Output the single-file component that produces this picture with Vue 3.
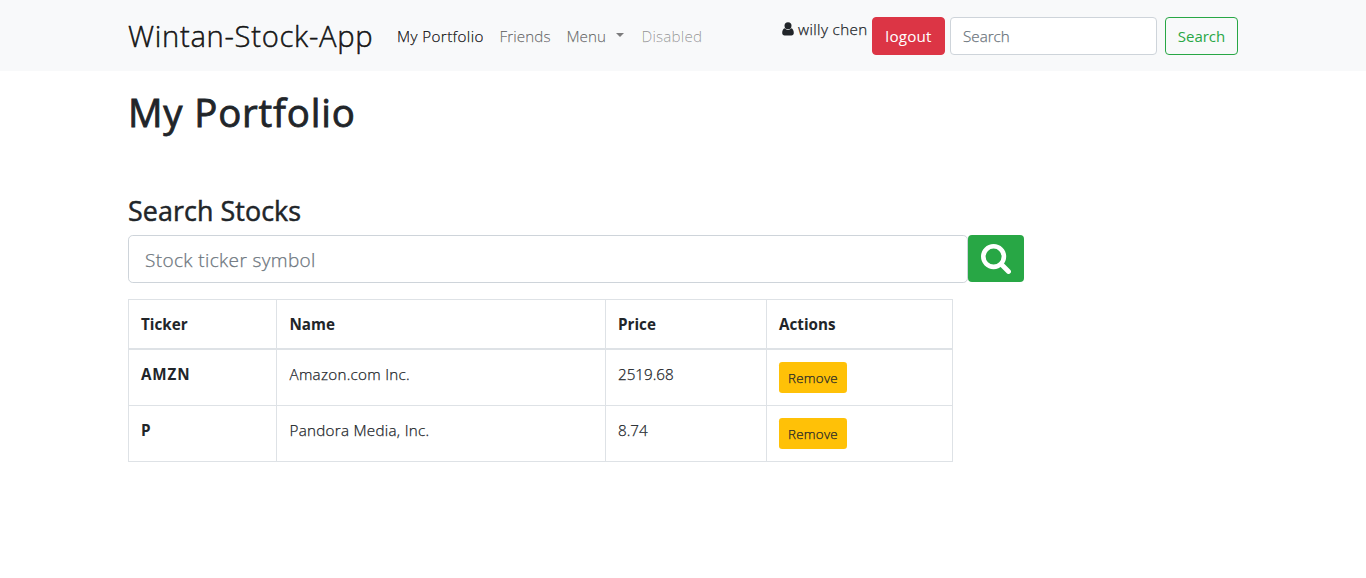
<script setup>
const stocks = [
  { ticker: 'AMZN', name: 'Amazon.com Inc.', price: '2519.68' },
  { ticker: 'P', name: 'Pandora Media, Inc.', price: '8.74' },
]
</script>

<template>
  <div class="page">
    <nav class="navbar">
      <a class="brand">Wintan-Stock-App</a>
      <ul class="links">
        <li class="active">My Portfolio</li>
        <li class="friends">Friends</li>
        <li class="menu">Menu<i class="caret"></i></li>
        <li class="disabled">Disabled</li>
      </ul>
      <div class="user">
        <svg width="12" height="14" viewBox="0 0 12 14" aria-hidden="true">
          <circle cx="6" cy="3.8" r="3.5" />
          <path d="M2.9 6.3C1 6.8.2 8.700.2 11.100c0 1.500 1 2.500 2.400 2.500h6.800c1.400 0 2.400-1 2.400-2.500C11.800 8.700 11 6.800 9.100 6.300 8.200 7.300 7.200 7.900 6 7.900S3.800 7.300 2.900 6.300z" />
        </svg>
        <span>willy chen</span>
      </div>
      <button class="btn logout">logout</button>
      <input class="nav-input" type="text" placeholder="Search" />
      <button class="btn outline">Search</button>
    </nav>
    <main>
      <h1>My Portfolio</h1>
      <h3>Search Stocks</h3>
      <div class="search">
        <input type="text" placeholder="Stock ticker symbol" />
        <button aria-label="Search stocks">
          <svg width="30" height="30" viewBox="0 0 30 30" fill="none" stroke="#fff">
            <circle cx="12.600" cy="12.600" r="10.300" stroke-width="4.600" />
            <path d="M20.300 20.300L27.500 27.500" stroke-width="4.800" stroke-linecap="round" />
          </svg>
        </button>
      </div>
      <table>
        <colgroup><col class="c1" /><col class="c2" /><col class="c3" /><col class="c4" /></colgroup>
        <thead>
          <tr><th>Ticker</th><th>Name</th><th>Price</th><th>Actions</th></tr>
        </thead>
        <tbody>
          <tr v-for="s in stocks" :key="s.ticker">
            <th class="ticker">{{ s.ticker }}</th>
            <td class="name">{{ s.name }}</td>
            <td>{{ s.price }}</td>
            <td><button class="remove">Remove</button></td>
          </tr>
        </tbody>
      </table>
    </main>
  </div>
</template>

<style>
body { margin: 0; background: #fff; }
</style>

<style scoped>
* { box-sizing: border-box; }
.page {
  font-family: "Open Sans", "Noto Sans", sans-serif;
  font-size: 15.2px;
  font-weight: 300;
  line-height: 24px;
  color: #212529;
  -webkit-text-stroke: .25px currentColor;
}
button, input { font: inherit; margin: 0; padding: 0; }
.navbar {
  display: flex;
  align-items: center;
  height: 71px;
  padding: 0 128px;
  background: #f8f9fa;
  white-space: nowrap;
}
.brand { width: 269px; font-size: 29.200px; line-height: 45px; letter-spacing: .7px; color: rgba(0, 0, 0, .9); padding-top: 1px; -webkit-text-stroke-width: .5px; }
.links { display: flex; list-style: none; margin: 0; padding: 0; color: rgba(0, 0, 0, .5); width: 385px; padding-top: 1px; }
.active { width: 102.500px; color: rgba(0, 0, 0, .9); letter-spacing: .4px; }
.friends { width: 67px; letter-spacing: .1px; }
.menu { width: 75px; display: flex; align-items: center; }
.caret { margin-left: 10px; margin-bottom: 2px; border: 4.800px solid transparent; border-top-color: currentColor; border-bottom: 0; }
.disabled { color: rgba(0, 0, 0, .3); letter-spacing: .2px; }
.user { display: flex; align-items: center; width: 90px; height: 24px; margin-bottom: 13px; letter-spacing: .4px; }
.user svg { margin-right: 4px; fill: #212529; }
.btn { height: 38px; width: 73px; border-radius: 4px; border: 1px solid; flex: none; }
.logout { background: #dc3545; border-color: #dc3545; color: #fff; font-weight: 400; letter-spacing: .2px; -webkit-text-stroke-width: 0; }
.nav-input { width: 207px; height: 38px; margin: 0 8px 0 5px; padding: 0 12px; border: 1px solid #ced4da; border-radius: 4px; background: #fff; flex: none; }
input::placeholder { color: #6c757d; opacity: 1; }
.outline { background: transparent; border-color: #28a745; color: #28a745; font-weight: 400; font-size: 15px; -webkit-text-stroke-width: 0; }
main { padding: 17px 0 0 128px; }
h1 { margin: 0; font-size: 38.400px; line-height: 48px; font-weight: 400; letter-spacing: .83px; -webkit-text-stroke-width: .8px; }
h3 { margin: 58px 0 0; font-size: 26.800px; line-height: 34px; font-weight: 400; letter-spacing: .1px; -webkit-text-stroke-width: .5px; }
.search { display: flex; align-items: flex-start; margin-top: 7px; }
.search input { width: 840px; height: 48px; padding: 1px 16px 0; border: 1px solid #ced4da; border-radius: 4.800px; font-size: 19px; letter-spacing: .37px; }
.search button { display: flex; align-items: center; justify-content: center; width: 56px; height: 47px; border: 0; border-radius: 4px; background: #28a745; }
table { width: 825px; margin-top: 16px; table-layout: fixed; border-collapse: collapse; }
.c1 { width: 148px; }
.c2 { width: 329px; }
.c3 { width: 161px; }
.c4 { width: 186px; }
th, td { border: 1px solid #dee2e6; text-align: left; vertical-align: top; padding: 12px; height: 56px; }
th { font-weight: 700; -webkit-text-stroke-width: 0; }
thead th { height: 49px; padding-bottom: 11px; border-bottom-width: 2px; }
thead th:nth-child(2), .name { padding-left: 12.500px; }
.ticker { letter-spacing: .85px; }
.name { letter-spacing: .28px; }
.remove { display: block; width: 68px; height: 31px; padding-top: 1px; border: 0; border-radius: 3.200px; background: #ffc107; color: #212529; font-size: 13.300px; letter-spacing: .3px; }
</style>
